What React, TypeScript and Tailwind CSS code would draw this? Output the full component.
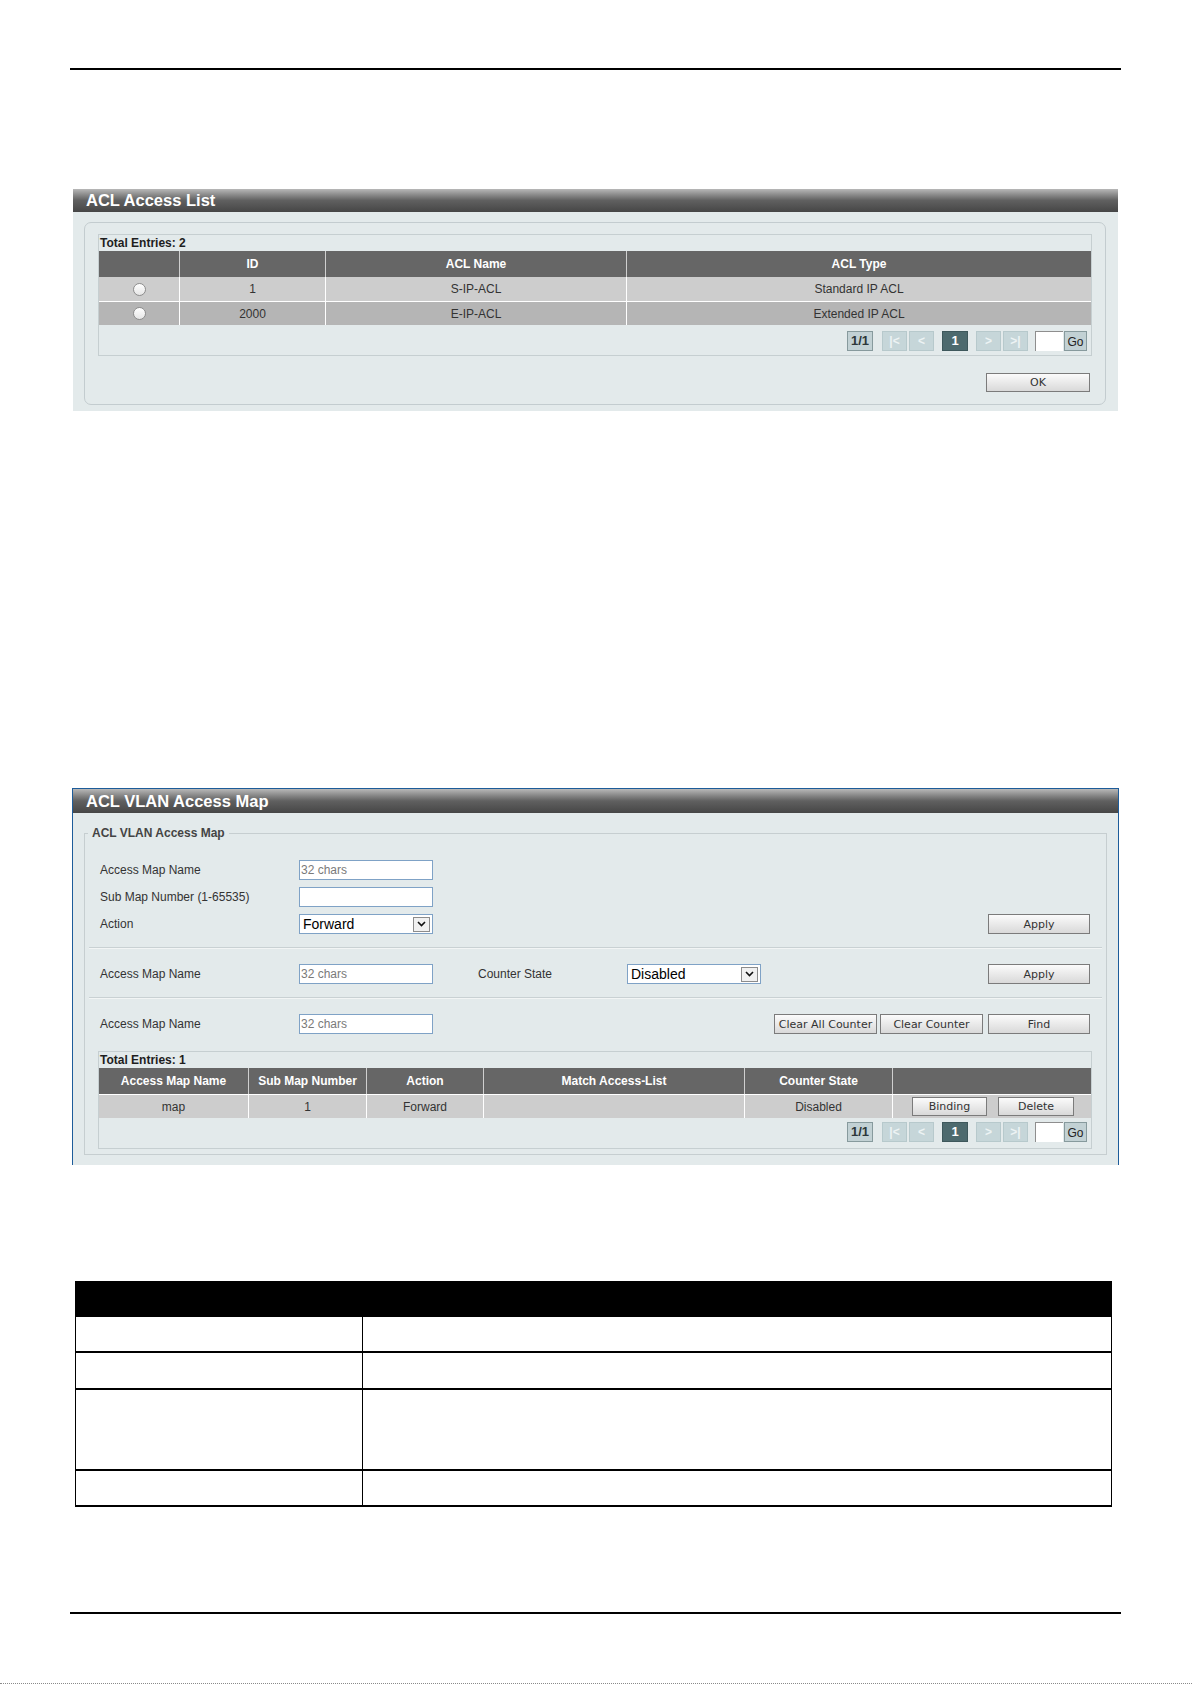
import React from "react";

type WithClass = { className?: string };

const aclRows = [
  { id: "1", name: "S-IP-ACL", type: "Standard IP ACL", bg: "bg-[#cdcdcd]" },
  { id: "2000", name: "E-IP-ACL", type: "Extended IP ACL", bg: "bg-[#b5b5b5]" },
];

const mapHeaders = ["Access Map Name", "Sub Map Number", "Action", "Match Access-List", "Counter State", ""];

function TitleBar({ title, className = "" }: { title: string } & WithClass) {
  return (
    <div
      className={`flex items-center bg-linear-to-b from-[#b8b8b8] via-[#606060] to-[#464646] pl-[13px] text-[16.5px] leading-none font-bold text-white ${className}`}
    >
      {title}
    </div>
  );
}

function GrayButton({ label, className = "" }: { label: string } & WithClass) {
  return (
    <button
      className={`flex items-center justify-center border border-[#7b7b7b] bg-linear-to-b from-[#fbfbfb] to-[#d9d9d9] font-['DejaVu_Sans',Verdana,sans-serif] text-[11px] leading-none text-[#333] ${className}`}
    >
      {label}
    </button>
  );
}

function TextBox({ placeholder = "" }: { placeholder?: string }) {
  return (
    <input
      readOnly
      placeholder={placeholder}
      className="h-[20px] w-[134px] border border-[#7fa2c6] bg-white pl-[1px] text-[12px] text-[#333] outline-none placeholder:text-[#7a7a7a]"
    />
  );
}

function DropDown({ value }: { value: string }) {
  return (
    <div className="flex h-[20px] w-[134px] items-center justify-between border border-[#7fa2c6] bg-white pr-[2px] pl-[3px]">
      <span className="text-[14px] leading-none text-black">{value}</span>
      <span className="flex h-[15px] w-[17px] items-center justify-center border border-[#8c8c8c] bg-[#f1f1f1]">
        <svg width="9" height="6" viewBox="0 0 9 6">
          <path d="M1 1l3.5 3.5L8 1" fill="none" stroke="#111" strokeWidth="1.6" />
        </svg>
      </span>
    </div>
  );
}

// page navigator under each list
function Pager() {
  const off = "flex h-[20px] w-[25px] items-center justify-center border border-[#b7c9cc] bg-[#c6d6d9] text-[12px] font-bold text-[#edf3f4]";
  return (
    <div className="flex items-center justify-end pr-[4px]">
      <span className="flex h-[20px] w-[26px] items-center justify-center border border-[#879a9d] bg-[#c2d1d4] text-[13px] font-bold text-[#2d3739]">
        1/1
      </span>
      <span className={`ml-[9px] ${off}`}>|&lt;</span>
      <span className={`ml-[2px] ${off}`}>&lt;</span>
      <span className="ml-[8px] flex h-[20px] w-[26px] items-center justify-center border border-[#3e585c] bg-[#4d6a6e] text-[13px] font-bold text-white">
        1
      </span>
      <span className={`ml-[8px] ${off}`}>&gt;</span>
      <span className={`ml-[2px] ${off}`}>&gt;|</span>
      <span className="ml-[7px] h-[20px] w-[28px] border-t border-l border-[#8e8e8e] bg-white" />
      <span className="ml-[1px] flex h-[20px] w-[23px] items-center justify-center border border-[#879a9d] bg-[#c2d1d4] pt-[2px] text-[12px] text-[#222]">
        Go
      </span>
    </div>
  );
}

function Radio() {
  return <span className="h-[13px] w-[13px] rounded-full border border-[#8d8d8d] bg-linear-to-b from-white to-[#e6e6e6]" />;
}

function FormRow({ label, children, className = "" }: { label: string; children: React.ReactNode } & WithClass) {
  return (
    <div className={`flex h-[20px] items-center pr-[16px] pl-[15px] ${className}`}>
      <span className="w-[199px] text-[12px] text-[#333]">{label}</span>
      {children}
    </div>
  );
}

function Divider({ className = "" }: WithClass) {
  return <div className={`mx-[4px] h-[2px] border-t border-b border-t-[#c9d1d3] border-b-[#f2f5f5] ${className}`} />;
}

export default function App() {
  return (
    <div className="flex h-[1684px] w-[1192px] flex-col bg-white font-['Liberation_Sans',Arial,sans-serif] text-[12px] text-[#333]">
      <div className="mt-[68px] ml-[70px] h-[2px] w-[1051px] shrink-0 bg-black" />

      {/* ACL Access List */}
      <section className="mt-[119px] ml-[73px] w-[1045px] shrink-0">
        <TitleBar title="ACL Access List" className="h-[23px]" />
        <div className="bg-[#e3eaeb] pt-[10px] pr-[12px] pb-[6px] pl-[11px]">
          <div className="rounded-[7px] border border-[#c3cccf] px-[13px] pt-[11px] pb-[12px]">
            <div className="border border-[#c6cfd1]">
              <div className="h-[16px] pl-[1px] text-[12px] leading-[16px] font-bold text-[#1e1e1e]">Total Entries: 2</div>
              <div className="grid grid-cols-[80px_146px_301px_465px]">
                {["", "ID", "ACL Name", "ACL Type"].map((h, i) => (
                  <div
                    key={i}
                    className={`flex h-[26px] items-center justify-center bg-[#666] text-[12px] font-bold text-white ${i > 0 ? "border-l border-[#cfcfcf]" : ""}`}
                  >
                    {h}
                  </div>
                ))}
                {aclRows.map((r, ri) => (
                  <React.Fragment key={r.id}>
                    {[<Radio key="r" />, r.id, r.name, r.type].map((c, i) => (
                      <div
                        key={i}
                        className={`flex items-center justify-center ${r.bg} text-[12px] text-[#333] ${ri > 0 ? "h-[24px] border-t border-t-white" : "h-[24px]"} ${i > 0 ? "border-l border-l-white" : ""}`}
                      >
                        {c}
                      </div>
                    ))}
                  </React.Fragment>
                ))}
              </div>
              <div className="pt-[6px] pb-[4px]">
                <Pager />
              </div>
            </div>
            <div className="mt-[17px] flex justify-end pr-[2px]">
              <GrayButton label="OK" className="h-[19px] w-[104px]" />
            </div>
          </div>
        </div>
      </section>

      {/* ACL VLAN Access Map */}
      <section className="mt-[377px] ml-[72px] w-[1047px] shrink-0 border-x border-t border-[#1d5c9a]">
        <TitleBar title="ACL VLAN Access Map" className="h-[24px]" />
        <div className="bg-[#e3eaeb] pt-[13px] pr-[11px] pb-[10px] pl-[11px]">
          <fieldset className="border border-[#c6ced0] pb-[5px]">
            <legend className="ml-[3px] px-[4px] text-[12px] leading-[14px] font-bold text-[#444]">ACL VLAN Access Map</legend>

            <FormRow label="Access Map Name" className="mt-[20px]">
              <TextBox placeholder="32 chars" />
            </FormRow>
            <FormRow label="Sub Map Number (1-65535)" className="mt-[7px]">
              <TextBox />
            </FormRow>
            <FormRow label="Action" className="mt-[7px]">
              <DropDown value="Forward" />
              <GrayButton label="Apply" className="ml-auto h-[20px] w-[102px]" />
            </FormRow>

            <Divider className="mt-[13px]" />

            <FormRow label="Access Map Name" className="mt-[15px]">
              <TextBox placeholder="32 chars" />
              <span className="ml-[45px] w-[149px] text-[12px] text-[#333]">Counter State</span>
              <DropDown value="Disabled" />
              <GrayButton label="Apply" className="ml-auto h-[20px] w-[102px]" />
            </FormRow>

            <Divider className="mt-[13px]" />

            <FormRow label="Access Map Name" className="mt-[15px]">
              <TextBox placeholder="32 chars" />
              <GrayButton label="Clear All Counter" className="ml-auto h-[20px] w-[103px]" />
              <GrayButton label="Clear Counter" className="ml-[3px] h-[20px] w-[103px]" />
              <GrayButton label="Find" className="ml-[5px] h-[20px] w-[102px]" />
            </FormRow>

            <div className="mt-[17px] mr-[14px] ml-[13px] border border-[#c6cfd1]">
              <div className="h-[16px] pl-[1px] text-[12px] leading-[16px] font-bold text-[#1e1e1e]">Total Entries: 1</div>
              <div className="grid grid-cols-[149px_118px_117px_261px_148px_199px]">
                {mapHeaders.map((h, i) => (
                  <div
                    key={i}
                    className={`flex h-[26px] items-center justify-center bg-[#666] text-[12px] font-bold text-white ${i > 0 ? "border-l border-[#cfcfcf]" : ""}`}
                  >
                    {h}
                  </div>
                ))}
                {["map", "1", "Forward", "", "Disabled"].map((c, i) => (
                  <div
                    key={i}
                    className={`flex h-[24px] items-center justify-center border-t border-t-white bg-[#cdcdcd] text-[12px] text-[#333] ${i > 0 ? "border-l border-l-white" : ""}`}
                  >
                    {c}
                  </div>
                ))}
                <div className="flex h-[24px] items-center border-t border-l border-white bg-[#cdcdcd] pl-[19px]">
                  <GrayButton label="Binding" className="h-[19px] w-[75px]" />
                  <GrayButton label="Delete" className="ml-[11px] h-[19px] w-[76px]" />
                </div>
              </div>
              <div className="pt-[4px] pb-[6px]">
                <Pager />
              </div>
            </div>
          </fieldset>
        </div>
      </section>

      {/* parameter description grid */}
      <div className="mt-[116px] ml-[75px] w-[1037px] shrink-0">
        <div className="h-[36px] bg-black" />
        {["h-[36px]", "h-[37px]", "h-[81px]", "h-[36px]"].map((h, i) => (
          <div key={i} className={`flex ${h} border-x border-b-2 border-black`}>
            <div className="w-[287px] border-r border-black" />
            <div className="flex-1" />
          </div>
        ))}
      </div>

      <div className="mt-[105px] ml-[70px] h-[2px] w-[1051px] shrink-0 bg-black" />

      <div className="mt-auto h-px w-full shrink-0 border-t border-dotted border-[#8a8a8a]" />
    </div>
  );
}
